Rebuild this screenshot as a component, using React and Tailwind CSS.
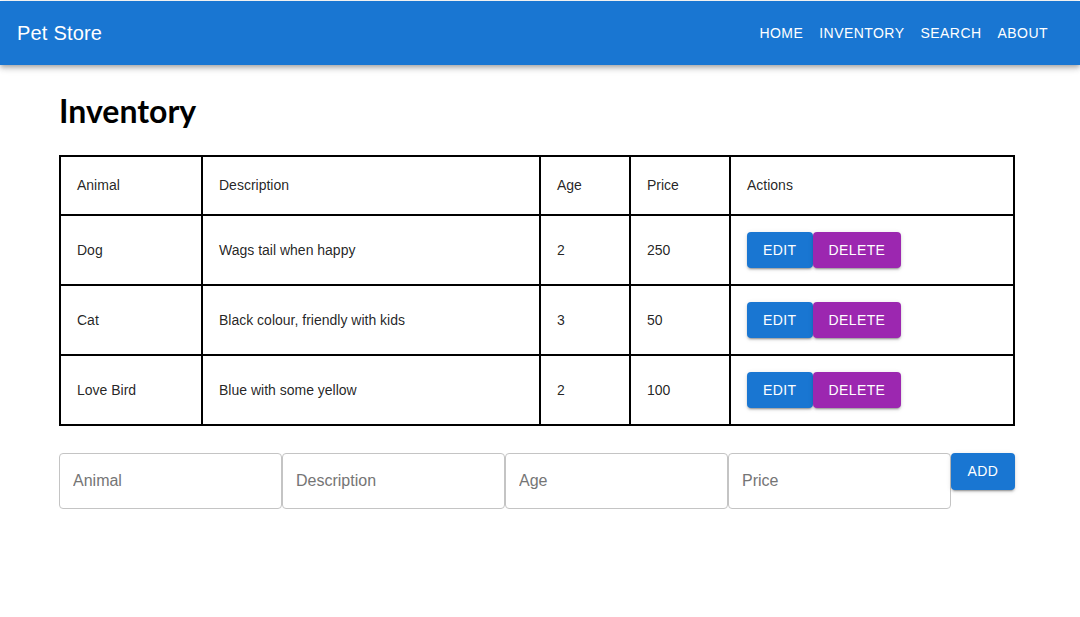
import { useState } from "react";

const pets = [
  { id: 1, animal: "Dog", description: "Wags tail when happy", age: 2, price: 250 },
  { id: 2, animal: "Cat", description: "Black colour, friendly with kids", age: 3, price: 50 },
  { id: 3, animal: "Love Bird", description: "Blue with some yellow", age: 2, price: 100 },
];

const navLinks = ["Home", "Inventory", "Search", "About"];

function NavBar() {
  return (
    <div className="pt-px">
      <header className="h-16 bg-[#1976d2] text-white flex items-center justify-between pl-[17px] pr-6 shadow-[0_2px_4px_-1px_rgba(0,0,0,0.2),0_4px_5px_0_rgba(0,0,0,0.14),0_1px_10px_0_rgba(0,0,0,0.12)]">
        <div className="text-[20px] tracking-[0.2px]">Pet Store</div>
        <nav className="flex items-center">
          {navLinks.map((link) => (
            <a key={link} href="#" className="px-2 py-1.5 text-[14px] uppercase tracking-[0.45px]">
              {link}
            </a>
          ))}
        </nav>
      </header>
    </div>
  );
}

function Inventory() {
  const [items] = useState(pets);

  return (
    <div className="px-[59px] pt-[28px]">
      <h1 className="text-[32px] leading-[36px] font-bold text-black font-['Lato',sans-serif] mb-[26px]">
        Inventory
      </h1>

      <table className="w-[954px] table-fixed border-collapse border-2 border-black text-[14px] text-[rgba(0,0,0,0.87)]">
        <colgroup>
          <col className="w-[142px]" />
          <col className="w-[338px]" />
          <col className="w-[90px]" />
          <col className="w-[100px]" />
          <col className="w-[284px]" />
        </colgroup>
        <thead>
          <tr className="h-[59px]">
            <th className="border-2 border-black px-4 text-left font-normal">Animal</th>
            <th className="border-2 border-black px-4 text-left font-normal">Description</th>
            <th className="border-2 border-black px-4 text-left font-normal">Age</th>
            <th className="border-2 border-black px-4 text-left font-normal">Price</th>
            <th className="border-2 border-black px-4 text-left font-normal">Actions</th>
          </tr>
        </thead>
        <tbody>
          {items.map((item) => (
            <tr key={item.id} className="h-[70px]">
              <td className="border-2 border-black px-4">{item.animal}</td>
              <td className="border-2 border-black px-4">{item.description}</td>
              <td className="border-2 border-black px-4">{item.age}</td>
              <td className="border-2 border-black px-4">{item.price}</td>
              <td className="border-2 border-black px-4">
                <div className="flex">
                  <button className="h-9 px-4 rounded bg-[#1976d2] text-white text-[14px] uppercase tracking-[0.4px] shadow-[0_3px_1px_-2px_rgba(0,0,0,0.2),0_2px_2px_0_rgba(0,0,0,0.14),0_1px_5px_0_rgba(0,0,0,0.12)]">
                    Edit
                  </button>
                  <button className="h-9 px-4 rounded bg-[#9c27b0] text-white text-[14px] uppercase tracking-[0.4px] shadow-[0_3px_1px_-2px_rgba(0,0,0,0.2),0_2px_2px_0_rgba(0,0,0,0.14),0_1px_5px_0_rgba(0,0,0,0.12)]">
                    Delete
                  </button>
                </div>
              </td>
            </tr>
          ))}
        </tbody>
      </table>

      <form className="flex items-start mt-[27px]" onSubmit={(e) => e.preventDefault()}>
        {["Animal", "Description", "Age", "Price"].map((label) => (
          <input
            key={label}
            placeholder={label}
            className="w-[223px] h-14 border border-[#c4c4c4] rounded px-[13px] text-[16px] text-[rgba(0,0,0,0.87)] placeholder:text-[#757575] outline-none"
          />
        ))}
        <button className="h-[37px] w-16 rounded bg-[#1976d2] text-white text-[14px] uppercase tracking-[0.4px] shadow-[0_3px_1px_-2px_rgba(0,0,0,0.2),0_2px_2px_0_rgba(0,0,0,0.14),0_1px_5px_0_rgba(0,0,0,0.12)]">
          Add
        </button>
      </form>
    </div>
  );
}

export default function App() {
  return (
    <div className="min-h-[617px] bg-white font-['Liberation_Sans',Arial,sans-serif]">
      <NavBar />
      <Inventory />
    </div>
  );
}
